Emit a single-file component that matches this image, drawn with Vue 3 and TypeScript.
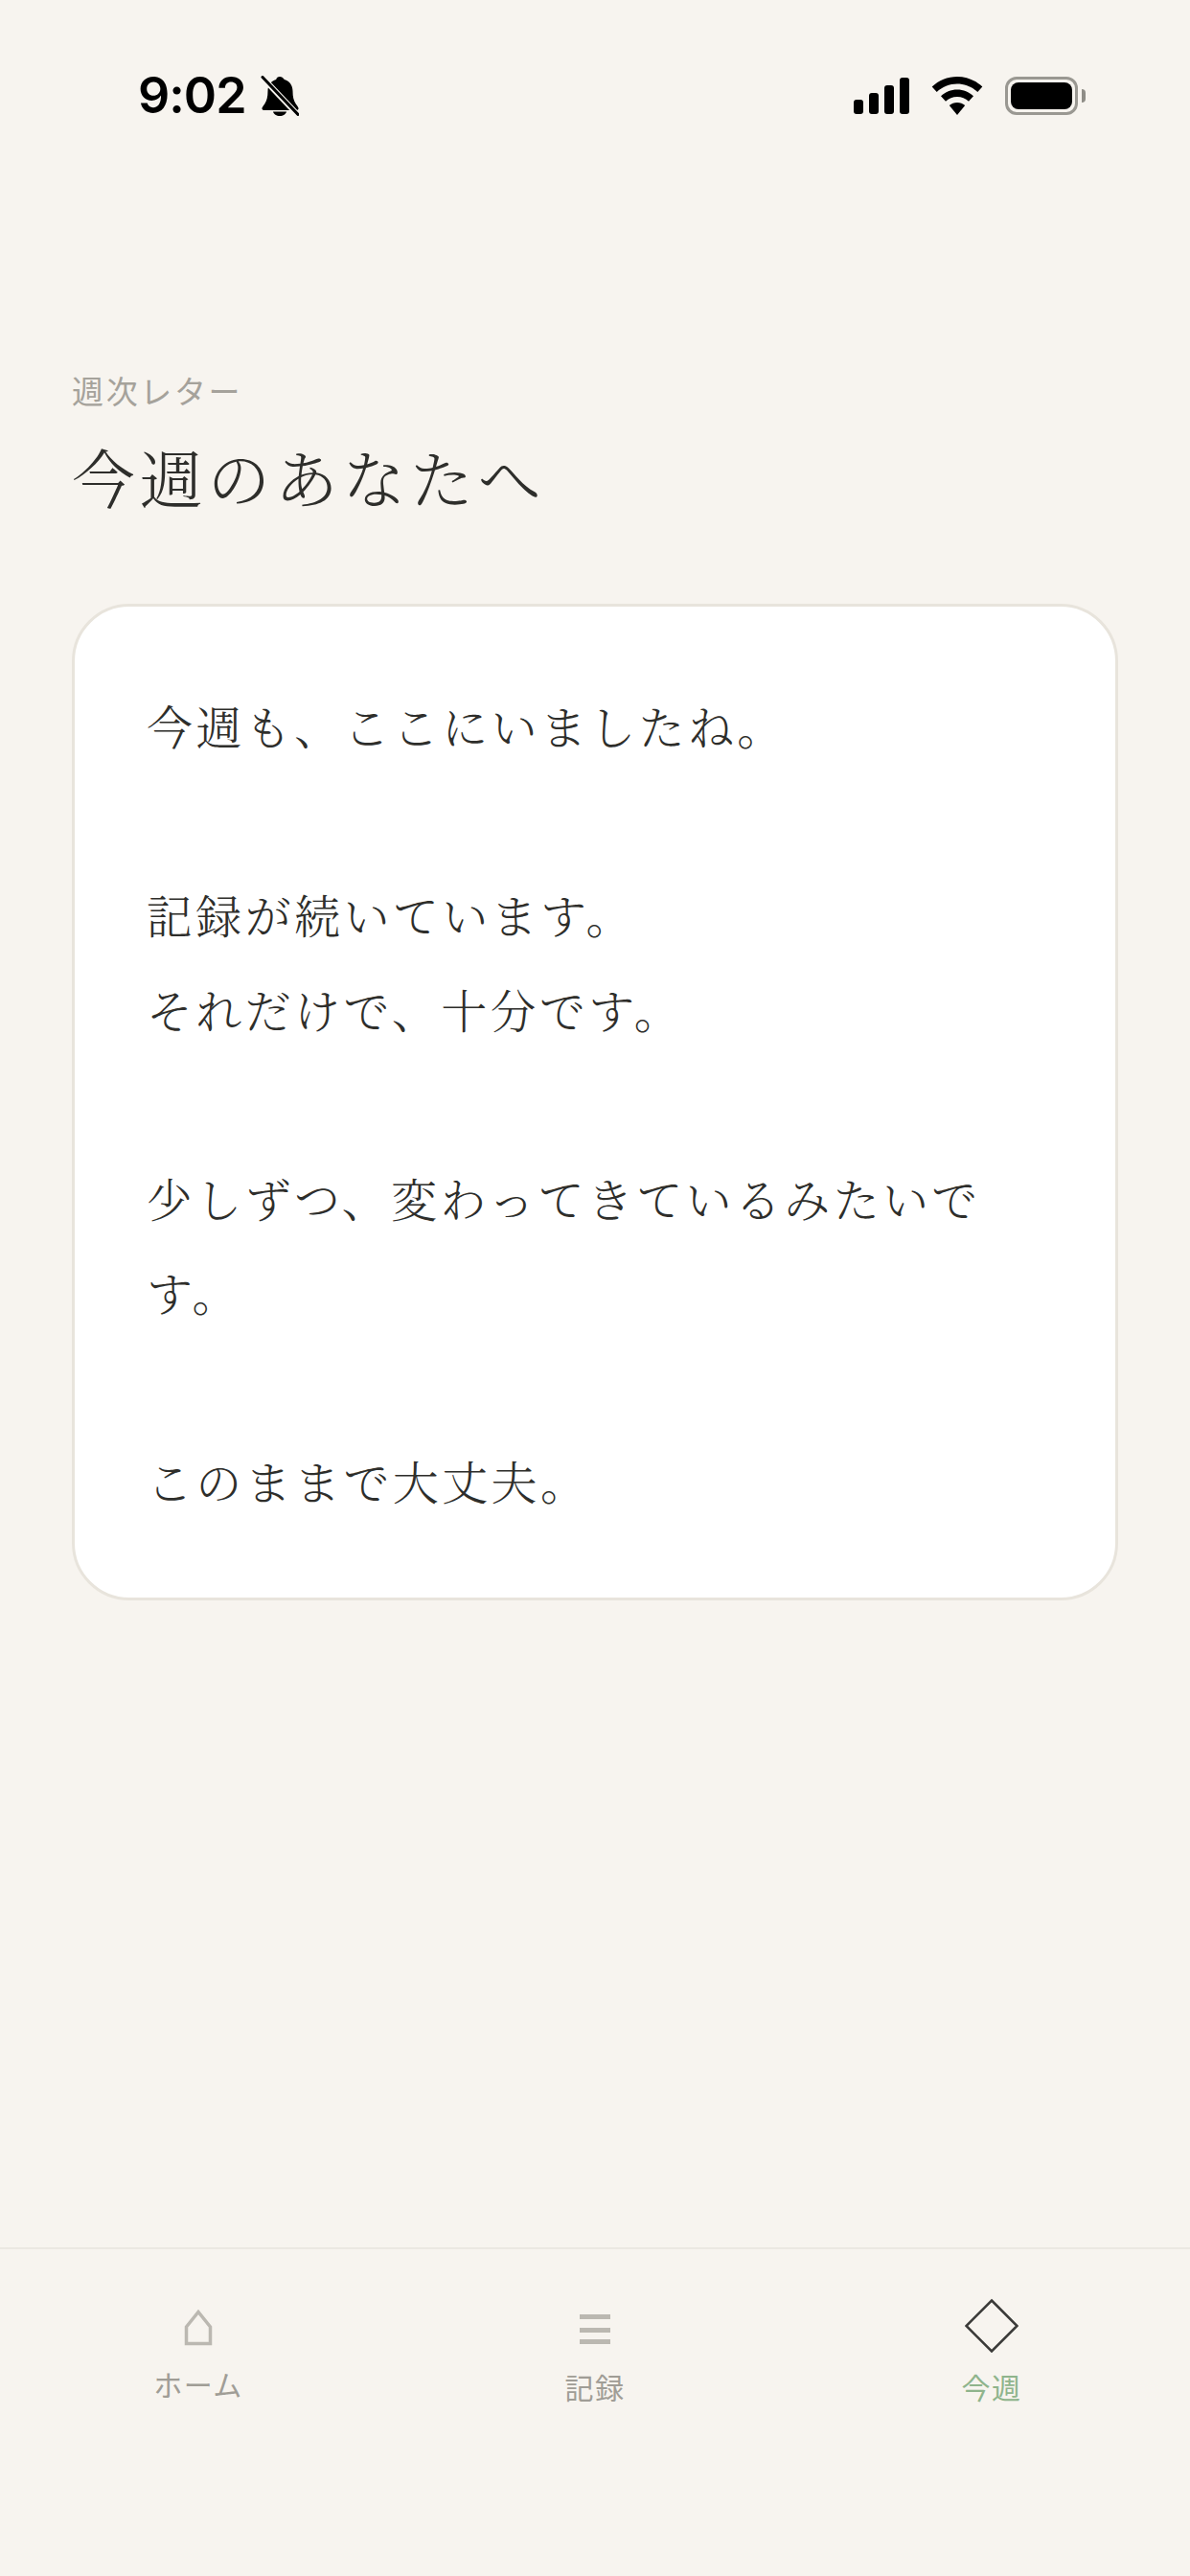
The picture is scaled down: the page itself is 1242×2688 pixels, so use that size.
<template>
  <div class="page">
    <div class="status-bar">
      <div class="status-left">
        <span class="time">9:02</span>
        <svg class="bell" viewBox="0 0 40 42">
          <path d="M20 1c-2 0-3.400 1.300-3.800 3C10.500 5.700 7.500 10.500 7.500 16c0 6-1 10-3.300 13.500-1.500 2.200-3.200 3.800-2.700 5.300.3 1 1.300 1.200 2.500 1.200h33c1.200 0 2.200-.2 2.500-1.200.5-1.500-1.200-3.100-2.700-5.300-2.300-3.500-3.300-7.500-3.300-13.500 0-5.500-3-10.300-8.700-12C23.400 2.300 22 1 20 1z" fill="#000" />
          <path d="M13 37.500h14c-.6 2.600-3.400 4.500-7 4.500s-6.400-1.900-7-4.500z" fill="#000" />
          <path d="M1 1l38 40" stroke="#f7f4ef" stroke-width="6" fill="none" />
          <path d="M2 1.500l37 39" stroke="#000" stroke-width="3" stroke-linecap="round" fill="none" />
        </svg>
      </div>
      <div class="status-right">
        <div class="signal">
          <span v-for="h in signalBars" :key="h" class="signal-bar" :style="{ height: h + 'px' }"></span>
        </div>
        <svg class="wifi" viewBox="0 0 54 40">
          <path d="M27 0c10 0 19.300 3.900 26.300 10.500l-5 5.600C42.600 10.800 35.100 7.600 27 7.600S11.400 10.800 5.700 16.100l-5-5.600C7.700 3.900 17 0 27 0z" fill="#000" />
          <path d="M27 13.500c6.500 0 12.400 2.500 17 6.700l-5 5.600c-3.200-3-7.400-4.700-12-4.700s-8.800 1.700-12 4.700l-5-5.600c4.600-4.200 10.500-6.700 17-6.700z" fill="#000" />
          <path d="M27 27c3.100 0 5.900 1.100 8.200 3L27 40l-8.200-10c2.300-1.900 5.100-3 8.200-3z" fill="#000" />
        </svg>
        <div class="battery">
          <div class="battery-fill"></div>
          <span class="battery-nub"></span>
        </div>
      </div>
    </div>

    <main class="content">
      <p class="eyebrow">週次レター</p>
      <h1 class="title">今週のあなたへ</h1>
      <section class="letter-card">
        <p class="letter-text">{{ letter }}</p>
      </section>
    </main>

    <nav class="tab-bar">
      <div class="tab tab-home">
        <svg class="tab-icon" width="30" height="60" viewBox="0 0 30 60">
          <path d="M2.500 53.500V36L15 20.500 27.500 36v17.500z" fill="none" stroke="#bbb8b1" stroke-width="3.500" />
        </svg>
        <span class="tab-label">ホーム</span>
      </div>
      <div class="tab">
        <svg class="tab-icon" width="32" height="63" viewBox="0 0 32 63">
          <path d="M0 25.500h32M0 39.500h32M0 51.500h32" stroke="#bbb8b1" stroke-width="5" fill="none" />
        </svg>
        <span class="tab-label">記録</span>
      </div>
      <div class="tab tab-active">
        <svg class="tab-icon" width="56" height="63" viewBox="0 0 56 63">
          <path d="M28 8.500L54.500 35 28 61.500 1.500 35z" fill="none" stroke="#3a3a38" stroke-width="2.500" />
        </svg>
        <span class="tab-label">今週</span>
      </div>
    </nav>
  </div>
</template>

<script setup lang="ts">
const signalBars: number[] = [15, 22, 30, 38]

const letter = `今週も、ここにいましたね。

記録が続いています。
それだけで、十分です。

少しずつ、変わってきているみたいです。

このままで大丈夫。`
</script>

<style>
html, body { margin: 0; background: #f7f4ef; }
</style>

<style scoped>
.page {
  display: flex;
  flex-direction: column;
  width: 1242px;
  height: 2688px;
  background: #f7f4ef;
  font-family: 'Noto Serif CJK JP', 'Noto Sans CJK JP', serif;
  color: #2e2e2b;
  overflow: hidden;
}

/* ステータスバー */
.status-bar {
  display: flex;
  justify-content: space-between;
  align-items: flex-start;
  height: 200px;
  padding: 70px 117px 0 144px;
  box-sizing: border-box;
}
.status-left { display: flex; align-items: center; gap: 15px; height: 60px; }
.time {
  font-family: Inter, sans-serif;
  font-size: 52px;
  font-weight: 600;
  line-height: 60px;
  letter-spacing: -1px;
  color: #000;
}
.bell { width: 40px; height: 42px; }
.status-right { display: flex; align-items: center; height: 60px; gap: 23px; }
.signal { display: flex; align-items: flex-end; gap: 6px; }
.signal-bar { display: block; width: 10px; background: #000; border-radius: 3px; }
.wifi { width: 54px; height: 40px; }
.battery {
  position: relative;
  box-sizing: border-box;
  width: 76px;
  height: 40px;
  padding: 3px;
  border: 3px solid #9a9892;
  border-radius: 12px;
}
.battery-fill { height: 100%; background: #000; border-radius: 8px; }
.battery-nub {
  position: absolute;
  top: 10px;
  right: -11px;
  width: 4px;
  height: 14px;
  background: #8f8d87;
  border-radius: 0 8px 8px 0;
}

/* 本文 */
.content { flex: 1; padding: 185px 75px 0; }
.eyebrow {
  margin: 0;
  font-family: 'Noto Sans CJK JP', sans-serif;
  font-size: 33px;
  font-weight: 400;
  line-height: 44px;
  letter-spacing: 0.08em;
  color: #a5a29b;
}
.title {
  margin: 23px 0 0;
  font-size: 66px;
  font-weight: 300;
  line-height: 90px;
  letter-spacing: 0.07em;
  color: #2e2e2b;
}
.letter-card {
  margin-top: 88px;
  padding: 75px 75px 72px;
  background: #fff;
  border: 3px solid #e8e4dc;
  border-radius: 60px;
}
.letter-text {
  margin: 0;
  font-size: 48px;
  font-weight: 300;
  line-height: 98.5px;
  letter-spacing: 0.07em;
  white-space: pre-wrap;
  color: #2e2e2b;
}

/* タブバー */
.tab-bar {
  display: grid;
  grid-template-columns: repeat(3, 1fr);
  height: 343px;
  box-sizing: border-box;
  padding-top: 45px;
  border-top: 2px solid #ebe8e2;
}
.tab { display: flex; flex-direction: column; align-items: center; }
.tab-icon { display: block; }
.tab-label {
  margin-top: 14px;
  font-family: 'Noto Sans CJK JP', sans-serif;
  font-size: 30px;
  font-weight: 400;
  line-height: 42px;
  letter-spacing: 0.05em;
  color: #a09d96;
}
.tab-active .tab-label { color: #8fb48c; }
</style>
